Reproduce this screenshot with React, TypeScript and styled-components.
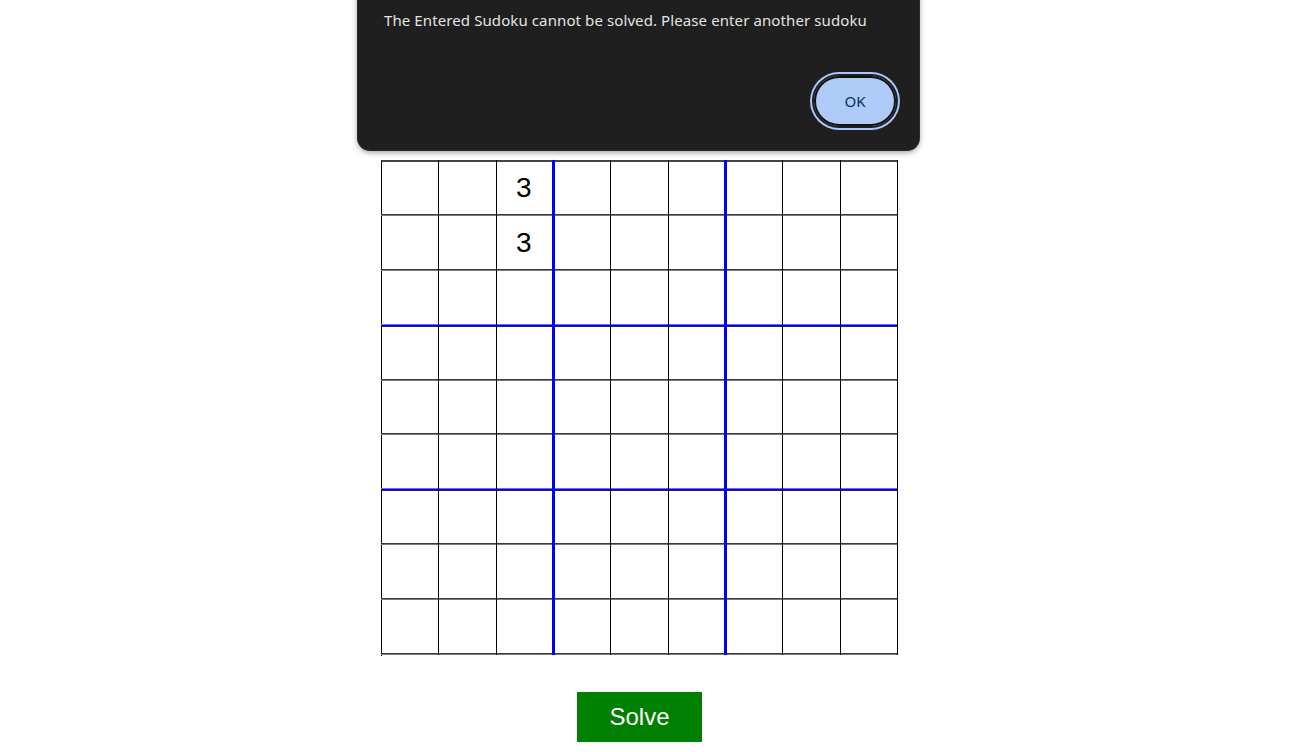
import React from "react";
import styled, { createGlobalStyle } from "styled-components";

const Global = createGlobalStyle`
  html, body { margin: 0; padding: 0; background: #ffffff; }
  body { font-family: "Liberation Sans", Arial, sans-serif; }
`;

const Page = styled.main`
  position: relative;
  width: 1301px;
  height: 752px;
  overflow: hidden;
  box-sizing: border-box;
  padding: 160px 22px 0 0;
  display: flex;
  flex-direction: column;
  align-items: center;
`;

const Board = styled.div`
  display: grid;
  grid-template-columns: repeat(9, 1fr);
  grid-template-rows: repeat(9, 54.9px);
  width: 517px;
  box-sizing: border-box;
  border-left: 1px solid #000;
  border-top: 2px solid #444;
  background: #fff;
`;

const Cell = styled.div`
  position: relative;
  display: flex;
  align-items: center;
  justify-content: center;
  padding: 0 3px 3px 0;
  font-family: "Liberation Sans", Arial, sans-serif;
  font-size: 28px;
  color: #000;
`;

const VLine = styled.span<{ $blue: boolean }>`
  position: absolute;
  top: -2px;
  bottom: 1px;
  right: ${(p) => (p.$blue ? "-1px" : "0")};
  width: ${(p) => (p.$blue ? "3px" : "1px")};
  background: ${(p) => (p.$blue ? "#0000ff" : "#000")};
  z-index: 2;
`;

const HLine = styled.span<{ $blue: boolean }>`
  position: absolute;
  left: -1px;
  right: 0;
  bottom: ${(p) => (p.$blue ? "0" : "1px")};
  height: ${(p) => (p.$blue ? "3px" : "2px")};
  background: ${(p) =>
    p.$blue
      ? "linear-gradient(#6a6aff 0 1px, #0000ff 1px 2px, #202060 2px 3px)"
      : "linear-gradient(#3a3a3a 0 1px, #7a7a7a 1px 2px)"};
  z-index: 1;
`;

const SolveButton = styled.button`
  margin-top: 36px;
  width: 125px;
  height: 50px;
  border: none;
  background: #008000;
  color: #ffffff;
  font-family: "Liberation Sans", Arial, sans-serif;
  font-size: 24px;
  cursor: pointer;
`;

const Dialog = styled.div`
  position: absolute;
  left: 358px;
  top: -20px;
  width: 561px;
  height: 170px;
  box-sizing: border-box;
  background: #1f1f1f;
  border-radius: 12px;
  box-shadow: 0 2px 6px rgba(0, 0, 0, 0.45), 0 0 0 1px #3a3a3a;
  padding: 30px 26px 20px 26px;
  display: flex;
  flex-direction: column;
  justify-content: space-between;
`;

const Message = styled.p`
  margin: 0;
  font-family: "Noto Sans", "Open Sans", sans-serif;
  font-size: 15px;
  letter-spacing: 0.1px;
  color: #e3e3e3;
`;

const Actions = styled.div`
  display: flex;
  justify-content: flex-end;
  margin-right: -5px;
  margin-bottom: 2px;
`;

const OkButton = styled.button`
  width: 86px;
  height: 54px;
  border-radius: 27px;
  background: #afcbf7;
  border: 2px solid #1f1f1f;
  box-shadow: 0 0 0 2px #a8c7fa;
  outline: 2px solid #111;
  outline-offset: -4px;
  color: #062e6f;
  font-family: "Noto Sans", "Open Sans", sans-serif;
  font-size: 15px;
  cursor: pointer;
`;

const values: Record<string, string> = { "0-2": "3", "1-2": "3" };

export default function App() {
  const cells = [];
  for (let r = 0; r < 9; r++) {
    for (let c = 0; c < 9; c++) {
      cells.push(
        <Cell key={`${r}-${c}`}>
          <VLine $blue={c === 2 || c === 5} />
          <HLine $blue={r === 2 || r === 5} />
          {values[`${r}-${c}`] ?? ""}
        </Cell>
      );
    }
  }
  return (
    <>
      <Global />
      <Page>
        <Board>{cells}</Board>
        <SolveButton>Solve</SolveButton>
        <Dialog>
          <Message>The Entered Sudoku cannot be solved. Please enter another sudoku</Message>
          <Actions>
            <OkButton>OK</OkButton>
          </Actions>
        </Dialog>
      </Page>
    </>
  );
}
